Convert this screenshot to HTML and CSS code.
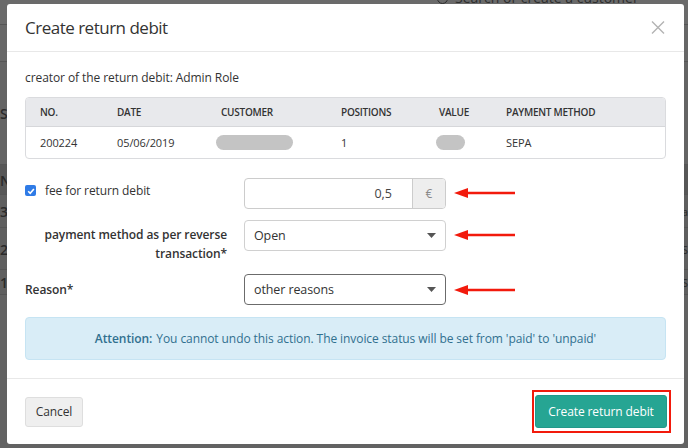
FILE: index.html
```html
<!DOCTYPE html>
<html lang="en">
<head>
<meta charset="utf-8">
<title>Create return debit</title>
<link rel="stylesheet" href="styles.css">
</head>
<body>
<div class="page">
  <div class="bg-top"><span class="bg-search"><i class="bg-circle"></i>Search or create a customer</span></div>
  <div class="bg-row bg-a"></div>
  <div class="bg-row bg-b"></div>
  <div class="bg-row bg-c"><span class="bg-l">SU</span></div>
  <div class="bg-row bg-d"><span class="bg-l">NC</span></div>
  <div class="bg-row bg-e"><span class="bg-l">3</span><span class="bg-r">a</span></div>
  <div class="bg-row bg-f"><span class="bg-l">2</span><span class="bg-r">S</span></div>
  <div class="bg-row bg-g"><span class="bg-l">1</span><span class="bg-r">S</span></div>
  <div class="bg-row bg-h"></div>
</div>

<div class="modal">
  <div class="modal-header">
    <h1 class="modal-title">Create return debit</h1>
    <span class="close">
      <svg width="14" height="13" viewBox="0 0 14 13"><path d="M1 0.5L13 12.5M13 0.5L1 12.5" stroke="#b3b3b3" stroke-width="1.4" fill="none"/></svg>
    </span>
  </div>

  <div class="modal-body">
    <p class="creator">creator of the return debit: Admin Role</p>

    <div class="table">
      <div class="tr th">
        <div>NO.</div><div>DATE</div><div>CUSTOMER</div><div>POSITIONS</div><div>VALUE</div><div>PAYMENT METHOD</div>
      </div>
      <div class="tr td">
        <div>200224</div><div>05/06/2019</div><div><span class="pill pill-wide"></span></div><div>1</div><div><span class="pill pill-small"></span></div><div>SEPA</div>
      </div>
    </div>

    <div class="form">
      <div class="row row-fee">
        <label class="lbl lbl-check">
          <span class="checkbox"><svg width="10" height="10" viewBox="0 0 10 10"><path d="M2.2 5.2L4.2 7.2L7.9 2.9" stroke="#fff" stroke-width="1.6" fill="none"/></svg></span>
          fee for return debit
        </label>
        <div class="input-group">
          <span class="input num">0,5</span>
          <span class="addon">€</span>
        </div>
        <svg class="arrow" width="62" height="12" viewBox="0 0 62 12"><path d="M12 6H61" stroke="#f21a0c" stroke-width="2.4"/><path d="M0 6L14 1V11Z" fill="#f21a0c"/></svg>
      </div>

      <div class="row row-pm">
        <label class="lbl lbl-right">payment method as per reverse transaction*</label>
        <div class="select">
          <span>Open</span>
          <svg width="9" height="5" viewBox="0 0 9 5"><path d="M0 0H9L4.5 5Z" fill="#555"/></svg>
        </div>
        <svg class="arrow" width="62" height="12" viewBox="0 0 62 12"><path d="M12 6H61" stroke="#f21a0c" stroke-width="2.4"/><path d="M0 6L14 1V11Z" fill="#f21a0c"/></svg>
      </div>

      <div class="row row-reason">
        <label class="lbl lbl-bold">Reason*</label>
        <div class="select select-dark">
          <span>other reasons</span>
          <svg width="9" height="5" viewBox="0 0 9 5"><path d="M0 0H9L4.5 5Z" fill="#555"/></svg>
        </div>
        <svg class="arrow" width="62" height="12" viewBox="0 0 62 12"><path d="M12 6H61" stroke="#f21a0c" stroke-width="2.4"/><path d="M0 6L14 1V11Z" fill="#f21a0c"/></svg>
      </div>
    </div>

    <div class="alert"><b>Attention:</b> You cannot undo this action. The invoice status will be set from 'paid' to 'unpaid'</div>
  </div>

  <div class="modal-footer">
    <button class="btn btn-default">Cancel</button>
    <span class="highlight"><button class="btn btn-primary">Create return debit</button></span>
  </div>
</div>
</body>
</html>
```

FILE: styles.css
```css
* { box-sizing: border-box; }
html, body { margin: 0; padding: 0; }
body {
  width: 688px;
  height: 448px;
  overflow: hidden;
  font-family: "Open Sans", "Noto Sans", sans-serif;
  color: #333;
  background: #636363;
}

/* background page behind the overlay */
.page { display: flex; flex-direction: column; height: 448px; }
.bg-top { height: 4px; overflow: hidden; background: #6a6a6a; }
.bg-search { display: flex; align-items: center; gap: 7px; margin-top: -10px; padding-left: 437px; font-size: 14px; line-height: 16px; color: #2e2e2e; white-space: nowrap; }
.bg-circle { width: 11px; height: 11px; border: 1px solid #2e2e2e; border-radius: 50%; }
.bg-row { position: relative; border-bottom: 1px solid #555; font-size: 14px; color: #2a2a2a; }
.bg-l { position: absolute; left: 0; top: 50%; transform: translateY(-50%); font-weight: 600; }
.bg-r { position: absolute; right: 0; top: 50%; transform: translateY(-50%); font-size: 11px; }
.bg-a { height: 21px; background: #6a6a6a; }
.bg-b { height: 37px; background: #676767; }
.bg-c { height: 103px; background: #646464; }
.bg-d { height: 30px; background: #575757; }
.bg-e { height: 33px; background: #5f5f5f; }
.bg-f { height: 42px; background: #5f5f5f; }
.bg-g { height: 25px; background: #5f5f5f; }
.bg-h { flex: 1; background: #626262; border-bottom: 0; }

/* modal (overlays the page) */
.modal {
  position: absolute;
  top: 4px;
  left: 7px;
  width: 677px;
  height: 440px;
  background: #fff;
  border-radius: 3px;
  display: flex;
  flex-direction: column;
}
.modal-header {
  height: 48px;
  flex: none;
  display: flex;
  align-items: center;
  justify-content: space-between;
  padding: 0 19px 0 18px;
  border-bottom: 1px solid #e8e8e8;
}
.modal-title { margin: 0; font-size: 17px; font-weight: 400; color: #333; letter-spacing: -0.5px; }
.close { display: flex; }

.modal-body { padding: 17px 18px 0 18px; display: flex; flex-direction: column; border-bottom: 1px solid #e8e8e8; flex: none; height: 327px; }
.creator { margin: 0; font-size: 12px; line-height: 18px; color: #333; letter-spacing: -0.08px; }

.table { margin-top: 10px; border: 1px solid #dadbde; border-radius: 4px; overflow: hidden; }
.tr { display: grid; grid-template-columns: 77px 104px 120px 98px 67px 1fr; padding-left: 14px; align-items: center; }
.th { height: 29px; background: #e8e9ec; border-bottom: 1px solid #d6d7da; font-size: 10px; font-weight: 600; color: #333; letter-spacing: -0.25px; }
.td { height: 31px; font-size: 11px; color: #333; letter-spacing: -0.1px; }
.pill { display: block; height: 15px; border-radius: 8px; background: #c4c4c4; }
.pill-wide { width: 77px; margin-left: -5px; }
.pill-small { width: 29px; margin-left: -3px; }

.form { margin-top: 19px; display: flex; flex-direction: column; gap: 11px; }
.row { display: flex; align-items: flex-start; }
.lbl { width: 202px; flex: none; margin-right: 17px; font-size: 12px; line-height: 19px; color: #333; letter-spacing: -0.1px; }
.lbl-check { display: flex; align-items: center; gap: 9px; padding-top: 3px; }
.checkbox { width: 11px; height: 11px; border-radius: 2px; background: #2f7be6; display: flex; align-items: center; justify-content: center; flex: none; }
.lbl-right { text-align: right; font-weight: 600; padding-top: 5px; }
.lbl-bold { font-weight: 600; }
.row-reason { align-items: center; }

.input-group { width: 202px; height: 31px; display: flex; border: 1px solid #ccc; border-radius: 4px; overflow: hidden; flex: none; }
.input { flex: 1; display: flex; align-items: center; font-size: 12.5px; color: #444; }
.num { justify-content: flex-end; padding-right: 20px; }
.addon { width: 33px; background: #eee; border-left: 1px solid #ccc; display: flex; align-items: center; justify-content: center; font-size: 12px; color: #888; }

.select { width: 202px; height: 31px; flex: none; display: flex; align-items: center; justify-content: space-between; padding: 0 9px 0 9px; border: 1px solid #d0d0d0; border-radius: 4px; font-size: 12.5px; color: #333; letter-spacing: -0.1px; }
.select-dark { border-color: #6b6b6b; }

.arrow { flex: none; margin-left: 8px; margin-top: 9px; }
.row-reason .arrow { margin-top: 0; }

.alert { margin-top: 12px; height: 43px; display: flex; align-items: center; justify-content: center; background: #d9edf7; border: 1px solid #c6e4f3; border-radius: 4px; font-size: 12px; color: #31708f; letter-spacing: -0.08px; }
.alert b { font-weight: 600; margin-right: 4px; }

.modal-footer { flex: 1; display: flex; justify-content: space-between; align-items: center; padding: 0 17px 0 18px; }
.btn { font-family: inherit; font-size: 12px; letter-spacing: -0.1px; border-radius: 3px; padding: 0; cursor: pointer; }
.btn-default { width: 58px; height: 30px; background: #efefef; border: 1px solid #dedede; color: #333; }
.highlight { display: flex; border: 2px solid #f21a0c; padding: 3px 2px 3px 1px; margin-right: -4px; }
.btn-primary { width: 132px; height: 33px; background: #26a593; border: 1px solid #22988a; color: #fff; }
```
